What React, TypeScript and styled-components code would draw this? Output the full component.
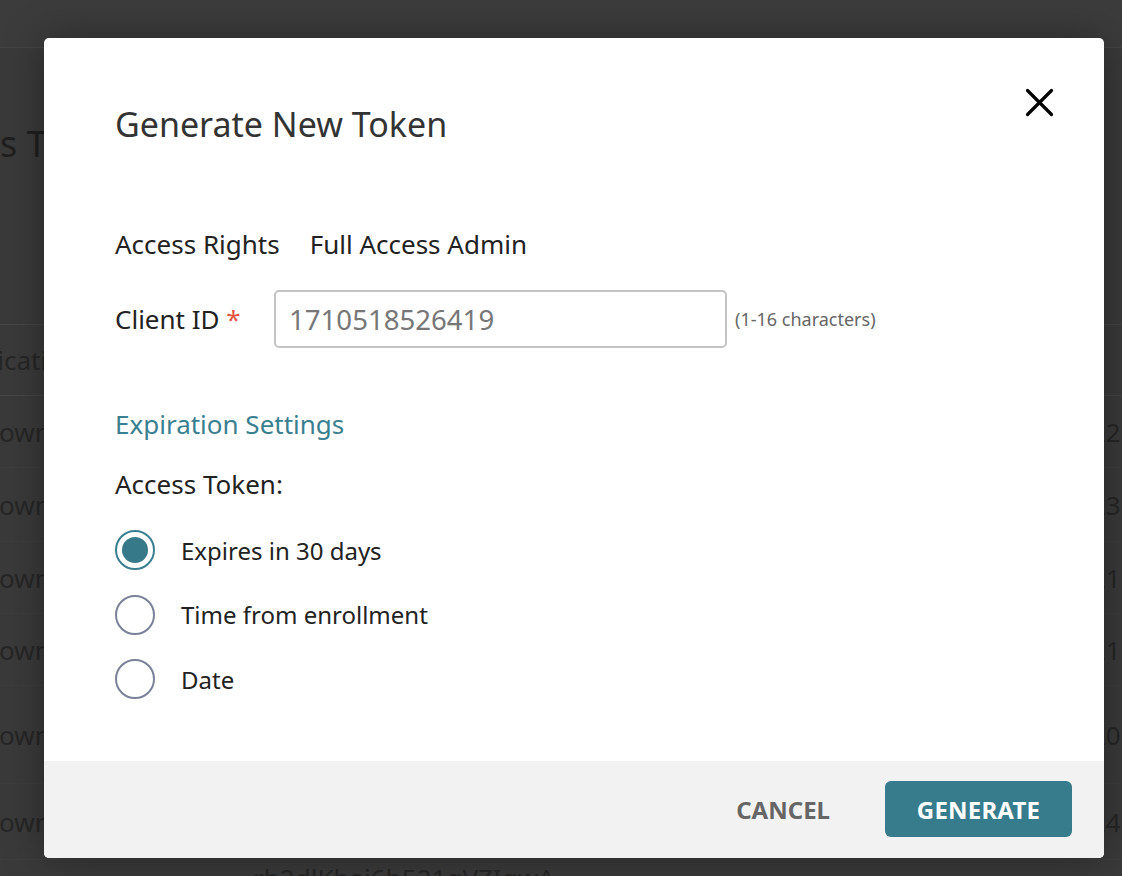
import React from "react";
import styled, { createGlobalStyle } from "styled-components";

const Global = createGlobalStyle`
  html, body { margin: 0; padding: 0; }
  body {
    background: #3a3a3a;
    font-family: "Noto Sans", "Open Sans", Arial, sans-serif;
    overflow: hidden;
  }
  * { box-sizing: border-box; }
`;

const Screen = styled.div`
  position: relative;
  width: 1122px;
  height: 876px;
  overflow: hidden;
  background: #3a3a3a;
`;

/* dimmed page under the modal */
const PageTop = styled.div`
  height: 48px;
  background: #3c3c3c;
  border-bottom: 1px solid #444444;
`;

const PageTitle = styled.h1`
  margin: 72px 0 0 -95px;
  font-size: 36px;
  font-weight: 400;
  line-height: 48px;
  color: #1f1f1f;
  white-space: nowrap;
`;

const Table = styled.div`
  margin-top: 156px;
  margin-left: -66px;
  display: flex;
  flex-direction: column;
`;

const HeadRow = styled.div`
  height: 72px;
  display: flex;
  align-items: center;
  border-top: 1px solid #454545;
  border-bottom: 1px solid #454545;
  font-size: 26px;
  color: #262626;
  white-space: nowrap;
`;

const Row = styled.div<{ $h: number }>`
  height: ${(p) => p.$h}px;
  display: flex;
  align-items: center;
  border-bottom: 1px solid #3d3d3d;
  font-size: 26px;
  color: #262626;
  white-space: nowrap;
`;

const CellApp = styled.div<{ $indent?: number }>`
  width: 1157px;
  flex: none;
  padding-left: ${(p) => p.$indent ?? 0}px;
`;

const CellDate = styled.div`
  flex: none;
`;

const TokenLine = styled.div`
  margin: 2px 0 0 253px;
  font-size: 26px;
  color: #262626;
  line-height: 32px;
  white-space: nowrap;
`;

/* modal */
const Dialog = styled.div`
  position: absolute;
  left: 44px;
  top: 38px;
  width: 1060px;
  height: 820px;
  background: #ffffff;
  border-radius: 5px;
  box-shadow: 0 0 40px rgba(0, 0, 0, 0.35);
  display: flex;
  flex-direction: column;
  overflow: hidden;
`;

const Body = styled.div`
  flex: 1;
  padding: 64px 71px 0 71px;
  display: flex;
  flex-direction: column;
`;

const Title = styled.h2`
  margin: 0;
  font-size: 34px;
  line-height: 44px;
  font-weight: 400;
  color: #333333;
`;

const CloseButton = styled.button`
  position: absolute;
  top: 50px;
  right: 50px;
  width: 29px;
  height: 29px;
  padding: 0;
  border: none;
  background: transparent;
  cursor: pointer;
  display: flex;
`;

const InfoRow = styled.div`
  margin-top: 82px;
  display: flex;
  align-items: center;
  gap: 30px;
  font-size: 26px;
  line-height: 32px;
  color: #222222;
`;

const FieldRow = styled.div`
  margin-top: 30px;
  display: flex;
  align-items: center;
  height: 58px;
`;

const FieldLabel = styled.label`
  width: 159px;
  font-size: 26px;
  line-height: 32px;
  color: #222222;
`;

const Required = styled.span`
  color: #e4533f;
`;

const TextInput = styled.input`
  width: 453px;
  height: 58px;
  border: 2px solid #c4c4c4;
  border-radius: 5px;
  padding: 0 13px;
  font-family: inherit;
  font-size: 27.6px;
  color: #777777;
  outline: none;
`;

const Hint = styled.span`
  margin-left: 8px;
  font-size: 18px;
  color: #666666;
`;

const SectionTitle = styled.h3`
  margin: 60px 0 0 0;
  font-size: 26px;
  line-height: 32px;
  font-weight: 400;
  color: #3a7f8f;
`;

const GroupLabel = styled.div`
  margin-top: 28px;
  font-size: 26px;
  line-height: 32px;
  color: #222222;
`;

const RadioList = styled.div`
  margin-top: 30px;
  display: flex;
  flex-direction: column;
  gap: 24.5px;
`;

const RadioRow = styled.label`
  display: flex;
  align-items: center;
  height: 40px;
  gap: 26px;
  font-size: 24px;
  color: #222222;
  cursor: pointer;
`;

const RadioCircle = styled.span<{ $checked: boolean }>`
  width: 40px;
  height: 40px;
  flex: none;
  border-radius: 50%;
  border: 2px solid ${(p) => (p.$checked ? "#3a7f8f" : "#7b8199")};
  display: flex;
  align-items: center;
  justify-content: center;
  &::after {
    content: "";
    width: 26px;
    height: 26px;
    border-radius: 50%;
    background: ${(p) => (p.$checked ? "#367a8a" : "transparent")};
  }
`;

const Footer = styled.div`
  height: 97px;
  background: #f2f2f2;
  display: flex;
  align-items: center;
  justify-content: flex-end;
  gap: 55px;
  padding: 0 32px 1px 0;
`;

const TextButton = styled.button`
  border: none;
  background: transparent;
  font-family: inherit;
  font-weight: 700;
  font-size: 24px;
  letter-spacing: 0px;
  color: #666666;
  padding: 0;
  cursor: pointer;
`;

const PrimaryButton = styled.button`
  width: 187px;
  height: 56px;
  border: none;
  border-radius: 6px;
  background: #377c8c;
  color: #ffffff;
  font-family: inherit;
  font-weight: 700;
  font-size: 24px;
  letter-spacing: 0.2px;
  cursor: pointer;
`;

const rows = [
  { h: 72, d: "22" },
  { h: 74, d: "23" },
  { h: 72, d: "21" },
  { h: 72, d: "21" },
  { h: 98, d: "20" },
  { h: 76, d: "24" },
];

const options = ["Expires in 30 days", "Time from enrollment", "Date"];

export default function App() {
  const [choice, setChoice] = React.useState(0);
  return (
    <>
      <Global />
      <Screen>
        <PageTop />
        <PageTitle>Access Tokens</PageTitle>
        <Table>
          <HeadRow>
            <CellApp $indent={8}>Application</CellApp>
          </HeadRow>
          {rows.map((r, i) => (
            <Row key={i} $h={r.h}>
              <CellApp>Unknown</CellApp>
              <CellDate>{r.d}</CellDate>
            </Row>
          ))}
        </Table>
        <TokenLine>rh2dlKhai6h521gVZIgwA</TokenLine>

        <Dialog role="dialog" aria-label="Generate New Token">
          <CloseButton aria-label="Close">
            <svg width="29" height="29" viewBox="0 0 29 29">
              <path
                d="M2.5 2.5 L26.5 26.5 M26.5 2.5 L2.5 26.5"
                stroke="#000"
                strokeWidth="3.2"
                strokeLinecap="round"
              />
            </svg>
          </CloseButton>
          <Body>
            <Title>Generate New Token</Title>
            <InfoRow>
              <span>Access Rights</span>
              <span>Full Access Admin</span>
            </InfoRow>
            <FieldRow>
              <FieldLabel>
                Client ID <Required>*</Required>
              </FieldLabel>
              <TextInput defaultValue="1710518526419" />
              <Hint>(1-16 characters)</Hint>
            </FieldRow>
            <SectionTitle>Expiration Settings</SectionTitle>
            <GroupLabel>Access Token:</GroupLabel>
            <RadioList>
              {options.map((o, i) => (
                <RadioRow key={o} onClick={() => setChoice(i)}>
                  <RadioCircle $checked={choice === i} />
                  {o}
                </RadioRow>
              ))}
            </RadioList>
          </Body>
          <Footer>
            <TextButton>CANCEL</TextButton>
            <PrimaryButton>GENERATE</PrimaryButton>
          </Footer>
        </Dialog>
      </Screen>
    </>
  );
}
